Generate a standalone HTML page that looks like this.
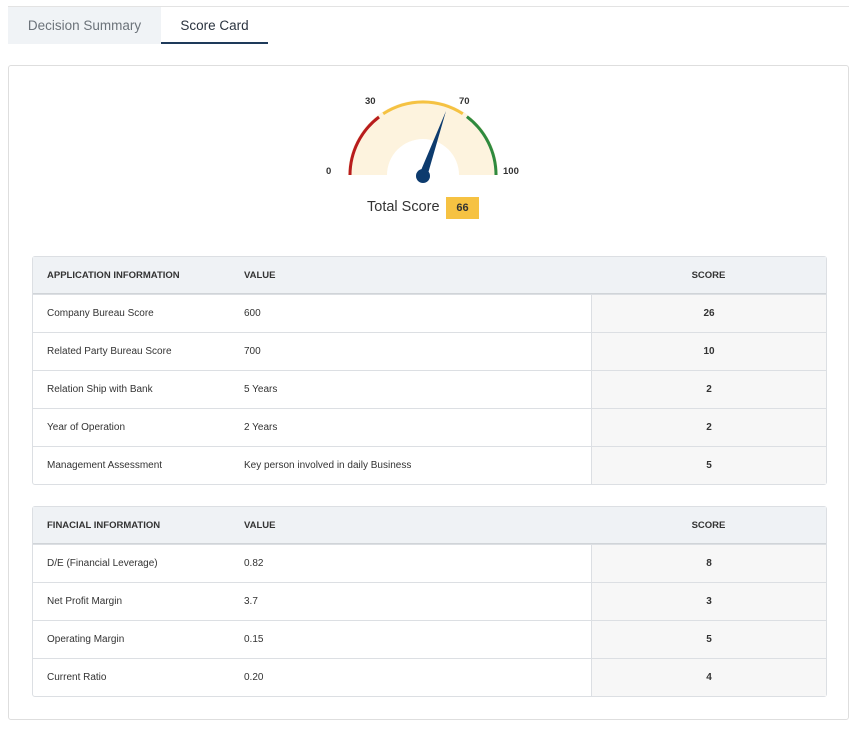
<!DOCTYPE html>
<html><head><meta charset="utf-8"><style>
body{margin:0;width:861px;height:734px;background:#fff;font-family:"Liberation Sans",sans-serif;position:relative;overflow:hidden;color:#333}
.abs{position:absolute}
.tab{position:absolute;top:7px;height:37px;line-height:37px;text-align:center;font-size:13.5px}
.card{position:absolute;left:8px;top:65px;width:839px;height:653px;border:1px solid #dedede;border-radius:3px}
table{position:absolute;left:32px;width:795px;border-collapse:separate;border-spacing:0;border:1px solid #dcdfe3;border-radius:3px;font-size:10px;color:#333}
td,th{height:37px;padding:0;border-top:1px solid #dcdfe3;text-align:left}
tr:first-child th{border-top:none;background:#eff2f5;font-weight:bold;font-size:9.5px;color:#333;border-bottom:1px solid #d0d4d8;height:36px}
td.c1,th.c1{padding-left:14px;width:197px}
td.c2,th.c2{width:347px}
td.c3{background:#f7f7f7;border-left:1px solid #dcdfe3;text-align:center;font-weight:bold}
th.c3{text-align:center}
</style></head><body>
<div class="abs" style="left:8px;top:6px;width:841px;height:1px;background:#e3e3e3"></div>
<div class="tab" style="left:8px;width:153px;background:#f0f3f6;color:#6c737a">Decision Summary</div>
<div class="tab" style="left:161px;width:107px;color:#2b3440">Score Card</div>
<div class="abs" style="left:161px;top:42px;width:107px;height:2px;background:#1e3a5a"></div>
<div class="card"></div>
<svg class="abs" style="left:0;top:0" width="861" height="240">
<path d="M348 175 A75 75 0 0 1 498 175 L459 175 A36 36 0 0 0 387 175 Z" fill="#fdf3de"/>
<path d="M350 175 A73 73 0 0 1 379 117" fill="none" stroke="#b81c1c" stroke-width="3"/>
<path d="M383.2 113.8 A73 73 0 0 1 462.8 113.8" fill="none" stroke="#f5c242" stroke-width="3"/>
<path d="M466.9 116.7 A73 73 0 0 1 496 175" fill="none" stroke="#2f8a3e" stroke-width="3"/>
<polygon points="419,175 427,177 446,111" fill="#0d3b6e"/>
<circle cx="423" cy="176" r="7" fill="#0d3b6e"/>
<g font-family="Liberation Sans" font-size="9.5" font-weight="bold" fill="#333">
<text x="326" y="174">0</text><text x="365" y="104">30</text><text x="459" y="104">70</text><text x="503" y="174">100</text>
</g>
</svg>
<div class="abs" style="left:367px;top:199px;font-size:14.5px;color:#333">Total Score</div>
<div class="abs" style="left:446px;top:197px;width:33px;height:22px;background:#f6c242;text-align:center;line-height:22px;font-size:11px;font-weight:bold;color:#333">66</div>
<table style="top:256px">
<tr><th class="c1">APPLICATION INFORMATION</th><th class="c2">VALUE</th><th class="c3">SCORE</th></tr>
<tr><td class="c1">Company Bureau Score</td><td>600</td><td class="c3">26</td></tr>
<tr><td class="c1">Related Party Bureau Score</td><td>700</td><td class="c3">10</td></tr>
<tr><td class="c1">Relation Ship with Bank</td><td>5 Years</td><td class="c3">2</td></tr>
<tr><td class="c1">Year of Operation</td><td>2 Years</td><td class="c3">2</td></tr>
<tr><td class="c1">Management Assessment</td><td>Key person involved in daily Business</td><td class="c3">5</td></tr>
</table>
<table style="top:506px">
<tr><th class="c1">FINACIAL INFORMATION</th><th class="c2">VALUE</th><th class="c3">SCORE</th></tr>
<tr><td class="c1">D/E (Financial Leverage)</td><td>0.82</td><td class="c3">8</td></tr>
<tr><td class="c1">Net Profit Margin</td><td>3.7</td><td class="c3">3</td></tr>
<tr><td class="c1">Operating Margin</td><td>0.15</td><td class="c3">5</td></tr>
<tr><td class="c1">Current Ratio</td><td>0.20</td><td class="c3">4</td></tr>
</table>
</body></html>
